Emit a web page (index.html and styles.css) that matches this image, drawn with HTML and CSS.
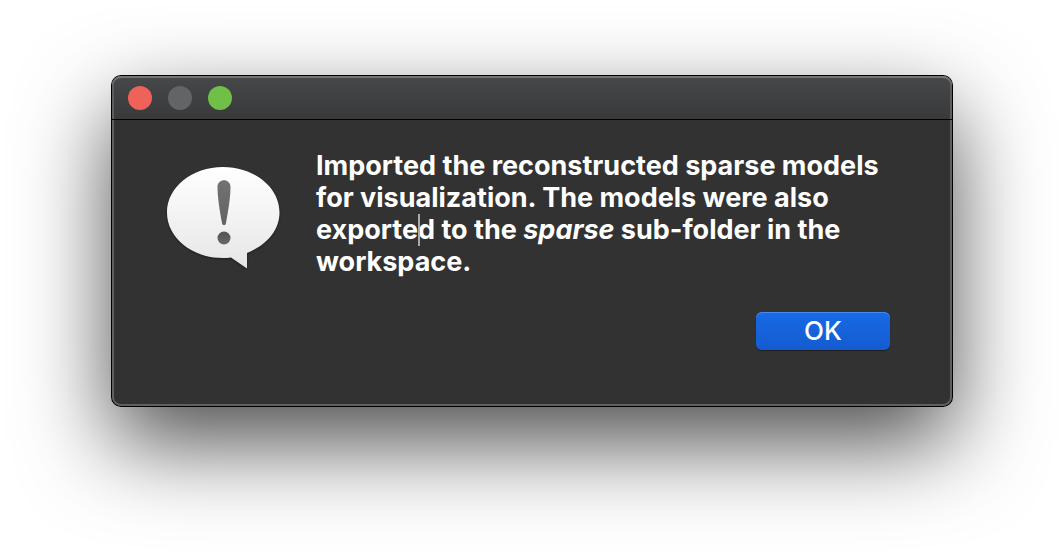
FILE: index.html
```
<!DOCTYPE html>
<html lang="en">
<head>
<meta charset="utf-8">
<title>Import complete</title>
<link rel="stylesheet" href="styles.css">
</head>
<body>
<main class="stage">
  <section class="dialog" role="alertdialog" aria-labelledby="message">
    <header class="titlebar">
      <button class="light close" aria-label="Close"></button>
      <button class="light minimize" aria-label="Minimize" disabled></button>
      <button class="light zoom" aria-label="Zoom"></button>
    </header>
    <div class="content">
      <svg class="icon" viewBox="0 0 120 110" aria-hidden="true">
        <defs>
          <linearGradient id="bubble" x1="0" y1="0" x2="0" y2="1">
            <stop offset="0" stop-color="#fff"/>
            <stop offset="1" stop-color="#e6e6e6"/>
          </linearGradient>
          <linearGradient id="mark" x1="0" y1="0" x2="0" y2="1">
            <stop offset="0" stop-color="#727272"/>
            <stop offset="1" stop-color="#626262"/>
          </linearGradient>
          <linearGradient id="dot" x1="0" y1="0" x2="0" y2="1">
            <stop offset="0" stop-color="#545454"/>
            <stop offset="1" stop-color="#686868"/>
          </linearGradient>
        </defs>
        <path fill="url(#bubble)" d="M59 3C28 3 3 23 3 48.500s25 45.500 56 45.500c3 0 5 0 8-.500L83 104.500V89C103 81 115.500 66 115.500 48.500C115.500 23 90 3 59 3Z"/>
        <path fill="url(#mark)" d="M53.500 23C53.500 14 66.500 14 66.500 23C66.500 34 64 48 62 59C61.500 62 58.500 62 58 59C56 48 53.500 34 53.500 23Z"/>
        <circle cx="60" cy="74" r="6.500" fill="url(#dot)"/>
      </svg>
      <p class="message" id="message">Imported the reconstructed sparse models for visualization. The models were also exporte<span class="caret"></span>d to the <em>sparse</em> sub-folder in the workspace.</p>
    </div>
    <footer class="actions"><button class="ok">OK</button></footer>
  </section>
</main>
</body>
</html>
```
FILE: styles.css
```
* { box-sizing: border-box; }
body { margin: 0; background: #fff; font-family: Inter, "Liberation Sans", sans-serif; }
.stage { padding: 76px 112px 40px; min-height: 100vh; overflow: hidden; }
.dialog {
  border-radius: 9px;
  background: #323232;
  padding-bottom: 56px;
  box-shadow: inset 0 0 0 2px #606060, 0 0 0 1px #000, 0 36px 90px rgba(0,0,0,.71);
}
.titlebar {
  display: flex;
  align-items: center;
  gap: 16px;
  height: 44px;
  padding: 0 16px;
  border-bottom: 1px solid #000;
  border-radius: 9px 9px 0 0;
  background: linear-gradient(#464849, #38393b);
  box-shadow: inset 0 2px #747576, inset 2px 0 #5c5d5e, inset -2px 0 #5c5d5e;
}
.light { width: 24px; height: 24px; padding: 0; border: 0; border-radius: 50%; }
.close { background: #ee6259; }
.minimize { background: #636466; }
.zoom { background: #70bf46; }
.content { display: flex; gap: 32px; padding: 30px 60px 0 52px; }
.icon { flex: none; width: 120px; height: 110px; margin-top: 14px; filter: drop-shadow(0 1px 1px rgba(0,0,0,.4)); }
.message { margin: 0; color: #fff; font-size: 27px; font-weight: 700; line-height: 32px; }
.caret { position: absolute; width: 2px; height: 32px; background: #aaa; }
.actions { display: flex; justify-content: flex-end; padding: 34px 62px 0; }
.ok {
  width: 134px;
  height: 38px;
  padding: 0;
  border: 0;
  border-radius: 6px;
  background: linear-gradient(#176ae6, #155bd0);
  box-shadow: inset 0 1px #468bed, 0 1px 1px rgba(0,0,0,.4);
  color: #fff;
  font: 500 26px/38px Inter, "Liberation Sans", sans-serif;
}
```
